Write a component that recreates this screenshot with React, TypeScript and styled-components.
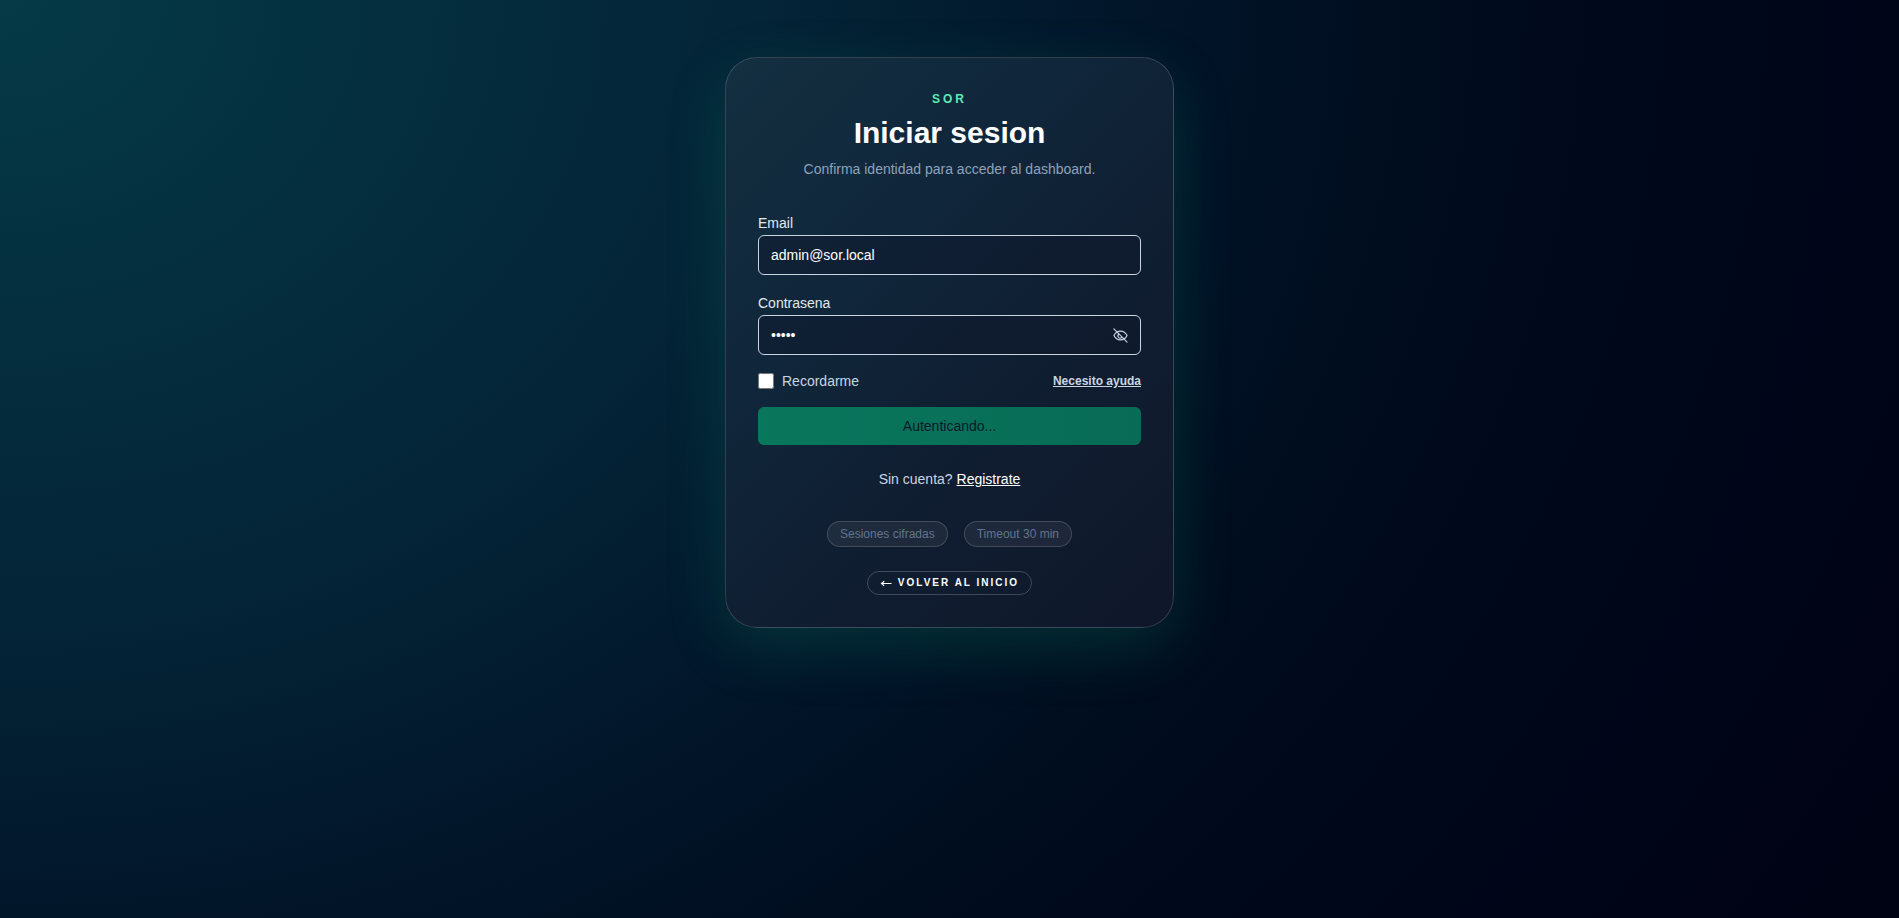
import React, { useState } from "react";
import styled, { createGlobalStyle } from "styled-components";

const GlobalStyle = createGlobalStyle`
  *, *::before, *::after { box-sizing: border-box; }
  body {
    margin: 0;
    background: #020617;
    color: #e2e8f0;
    font-family: "Liberation Sans", Arial, sans-serif;
    font-size: 14px;
    line-height: 20px;
  }
`;

const Page = styled.main`
  min-height: 100vh;
  display: flex;
  align-items: flex-start;
  justify-content: center;
  padding: 57px 16px;
  background: radial-gradient(
    115% 195% at top left,
    #053a46 0%,
    #042a3b 25%,
    #042437 35%,
    #02162a 51%,
    #000e20 63%,
    #00081b 75%,
    #000417 90%,
    #000314 100%
  );
`;

const Card = styled.section`
  width: 100%;
  max-width: 449px;
  padding: 32px;
  border: 1px solid rgba(255, 255, 255, 0.16);
  border-radius: 32px;
  background: linear-gradient(135deg, #132f40 0%, #10263a 35%, #101e31 60%, #0f172a 100%);
  box-shadow: 0 20px 60px rgba(16, 185, 129, 0.18);
`;

const Header = styled.header`
  text-align: center;
`;

const Brand = styled.p`
  margin: 0;
  color: #5ee9b5;
  font-size: 12px;
  font-weight: 700;
  line-height: 18px;
  letter-spacing: 3px;
`;

const Title = styled.h1`
  margin: 8px 0;
  color: #fff;
  font-size: 30px;
  font-weight: 700;
  line-height: 34px;
`;

const Subtitle = styled.p`
  margin: 0;
  color: #90a1b9;
  line-height: 22px;
`;

const Form = styled.form`
  display: flex;
  flex-direction: column;
  gap: 16px;
  margin-top: 31px;
`;

const Field = styled.div`
  display: flex;
  flex-direction: column;
`;

const Label = styled.label`
  display: block;
  margin: 2px 0;
`;

const InputBox = styled.div`
  display: flex;
  align-items: center;
  height: 40px;
  padding: 0 12px;
  border: 1px solid #cad5e2;
  border-radius: 6px;
  background: rgba(15, 23, 42, 0.4);
`;

const Input = styled.input`
  flex: 1;
  min-width: 0;
  padding: 0;
  border: 0;
  outline: 0;
  background: transparent;
  color: #fff;
  font: inherit;
`;

const IconButton = styled.button`
  display: flex;
  padding: 0;
  border: 0;
  background: none;
  color: #cad5e2;
  cursor: pointer;
`;

const Options = styled.div`
  display: flex;
  align-items: center;
  justify-content: space-between;
`;

const Remember = styled.label`
  display: flex;
  align-items: center;
  gap: 8px;
  color: #cad5e2;
`;

const Checkbox = styled.input`
  width: 16px;
  height: 16px;
  margin: 0;
`;

const HelpLink = styled.a`
  color: #cad5e2;
  font-size: 12px;
  font-weight: 700;
  line-height: 16px;
`;

const Submit = styled.button`
  height: 38px;
  border: 0;
  border-radius: 6px;
  background: linear-gradient(90deg, #09775c, #086b55);
  color: #04192a;
  font: inherit;
`;

const SignUp = styled.p`
  margin: 24px 0 0;
  text-align: center;
  color: #cad5e2;
`;

const SignUpLink = styled.a`
  color: #fff;
`;

const Pills = styled.ul`
  display: flex;
  flex-wrap: wrap;
  justify-content: center;
  gap: 16px;
  margin: 32px 0 24px;
  padding: 0;
  list-style: none;
`;

const Pill = styled.li`
  padding: 4px 12px;
  border: 1px solid rgba(255, 255, 255, 0.16);
  border-radius: 13px;
  background: rgba(255, 255, 255, 0.06);
  color: #62748e;
  font-size: 12px;
  line-height: 16px;
`;

const Footer = styled.footer`
  display: flex;
  justify-content: center;
`;

const BackLink = styled.a`
  display: flex;
  align-items: center;
  gap: 6px;
  padding: 4px 12px;
  border: 1px solid rgba(255, 255, 255, 0.2);
  border-radius: 12px;
  color: #fff;
  font-size: 10px;
  font-weight: 700;
  line-height: 14px;
  letter-spacing: 2px;
  text-decoration: none;
`;

const BackArrow = () => (
  <svg width="12" height="8" viewBox="0 0 12 8" fill="none" stroke="currentColor" strokeWidth="1.2" aria-hidden="true">
    <path d="M1 4.500h10.500M4 2C3.500 3.300 2.500 4.200 1 4.500c1.500.3 2.500 1.200 3 2.500" />
  </svg>
);

const EyeOffIcon = () => (
  <svg width="15" height="15" viewBox="0 0 24 24" fill="none" stroke="currentColor" strokeWidth="1.8" strokeLinecap="round" strokeLinejoin="round" aria-hidden="true">
    <path d="M1.5 12s3.5-7 10.5-7 10.5 7 10.5 7-3.5 7-10.5 7S1.5 12 1.5 12z" />
    <path d="M9 10a3.500 3.500 0 1 0 5 5" />
    <path d="M1.500 1.500l21 21" />
  </svg>
);

export default function App() {
  const [email, setEmail] = useState("admin@sor.local");
  const [password, setPassword] = useState("admin");
  const [visible, setVisible] = useState(false);

  return (
    <>
      <GlobalStyle />
      <Page>
        <Card>
          <Header>
            <Brand>SOR</Brand>
            <Title>Iniciar sesion</Title>
            <Subtitle>Confirma identidad para acceder al dashboard.</Subtitle>
          </Header>
          <Form onSubmit={(event) => event.preventDefault()}>
            <Field>
              <Label htmlFor="email">Email</Label>
              <InputBox>
                <Input id="email" type="email" value={email} onChange={(event) => setEmail(event.target.value)} />
              </InputBox>
            </Field>
            <Field>
              <Label htmlFor="password">Contrasena</Label>
              <InputBox>
                <Input
                  id="password"
                  type={visible ? "text" : "password"}
                  value={password}
                  onChange={(event) => setPassword(event.target.value)}
                />
                <IconButton type="button" aria-label="Mostrar contrasena" onClick={() => setVisible(!visible)}>
                  <EyeOffIcon />
                </IconButton>
              </InputBox>
            </Field>
            <Options>
              <Remember>
                <Checkbox type="checkbox" />
                Recordarme
              </Remember>
              <HelpLink href="#ayuda">Necesito ayuda</HelpLink>
            </Options>
            <Submit type="submit" disabled>Autenticando...</Submit>
          </Form>
          <SignUp>
            Sin cuenta? <SignUpLink href="#registro">Registrate</SignUpLink>
          </SignUp>
          <Pills>
            <Pill>Sesiones cifradas</Pill>
            <Pill>Timeout 30 min</Pill>
          </Pills>
          <Footer>
            <BackLink href="#inicio">
              <BackArrow />
              VOLVER AL INICIO
            </BackLink>
          </Footer>
        </Card>
      </Page>
    </>
  );
}
